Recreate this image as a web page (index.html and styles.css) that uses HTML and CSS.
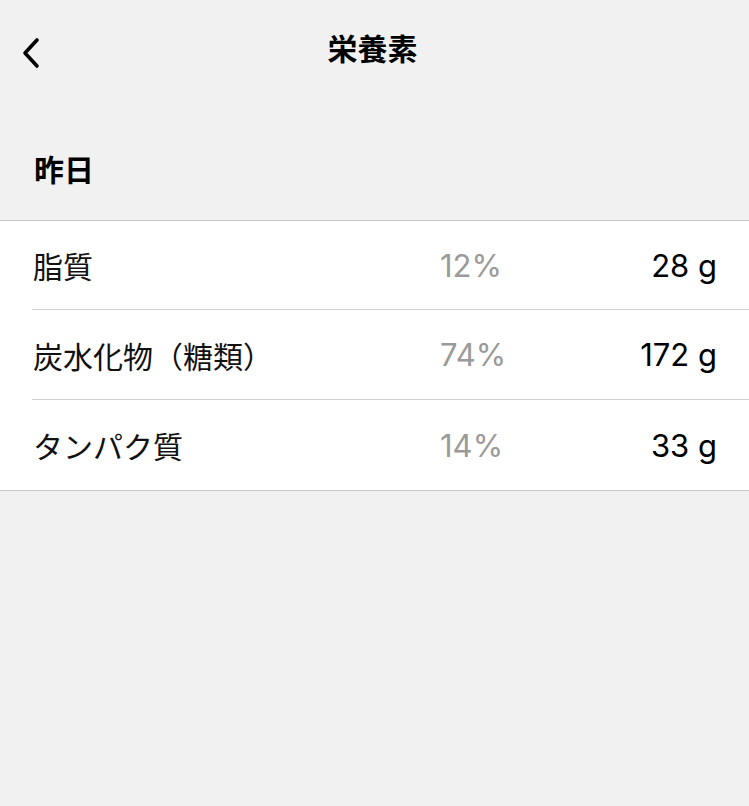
FILE: index.html
```html
<!DOCTYPE html>
<html lang="ja">
<head>
    <meta charset="UTF-8">
    <meta name="viewport" content="width=device-width, initial-scale=1.0">
    <title>栄養素</title>
    <link rel="stylesheet" href="styles.css">
</head>
<body>
    <header class="nav-bar">
        <button class="back-button" aria-label="戻る">
            <svg width="20" height="32" viewBox="0 0 20 32">
                <path d="M16 3 L4 16 L16 29" fill="none" stroke="#000" stroke-width="3.6" stroke-linecap="round" stroke-linejoin="round"/>
            </svg>
        </button>
        <div class="nav-title">栄養素</div>
        <div></div>
    </header>

    <div class="section-title">昨日</div>

    <div class="nutrient-list">
        <div class="nutrient-row">
            <div class="nutrient-inner">
                <span class="nutrient-name">脂質</span>
                <span class="nutrient-percent">12%</span>
                <span class="nutrient-amount">28 g</span>
            </div>
        </div>
        <div class="nutrient-row">
            <div class="nutrient-inner">
                <span class="nutrient-name">炭水化物（糖類）</span>
                <span class="nutrient-percent">74%</span>
                <span class="nutrient-amount">172 g</span>
            </div>
        </div>
        <div class="nutrient-row">
            <div class="nutrient-inner">
                <span class="nutrient-name">タンパク質</span>
                <span class="nutrient-percent">14%</span>
                <span class="nutrient-amount">33 g</span>
            </div>
        </div>
    </div>
</body>
</html>
```

FILE: styles.css
```css
body {
    font-family: "Liberation Sans", "Noto Sans CJK JP", sans-serif;
    margin: 0;
    padding: 0;
    background: #f1f1f1;
    color: #111;
}

.nav-bar {
    display: grid;
    grid-template-columns: 1fr auto 1fr;
    align-items: center;
    height: 100px;
}

.back-button {
    justify-self: start;
    background: none;
    border: none;
    padding: 0 0 0 21px;
    margin-top: 6px;
    display: flex;
    cursor: pointer;
}

.nav-title {
    font-size: 30px;
    font-weight: bold;
    color: #000;
    line-height: 40px;
    margin-left: -4px;
}

.section-title {
    font-size: 30px;
    font-weight: bold;
    color: #000;
    line-height: 40px;
    padding: 51px 0 29px 34px;
}

.nutrient-list {
    background: #fff;
    border-top: 1px solid #c8c8c8;
    border-bottom: 1px solid #c8c8c8;
}

.nutrient-row {
    padding-left: 32px;
}

.nutrient-inner {
    box-sizing: border-box;
    display: flex;
    align-items: center;
    height: 90px;
    padding-right: 32px;
    border-bottom: 1px solid #cfcfcf;
}

.nutrient-row:first-child .nutrient-inner {
    height: 89px;
}

.nutrient-row:last-child .nutrient-inner {
    border-bottom: none;
}

.nutrient-name {
    flex: 1;
    font-family: "Noto Sans CJK JP", sans-serif;
    font-size: 30px;
    padding-left: 1px;
}

.nutrient-percent {
    width: 120px;
    font-family: Inter, "Liberation Sans", sans-serif;
    font-size: 31px;
    color: #9a9a9a;
}

.nutrient-amount {
    width: 157px;
    text-align: right;
    font-family: Inter, "Liberation Sans", sans-serif;
    font-size: 31px;
    color: #000;
}
```
